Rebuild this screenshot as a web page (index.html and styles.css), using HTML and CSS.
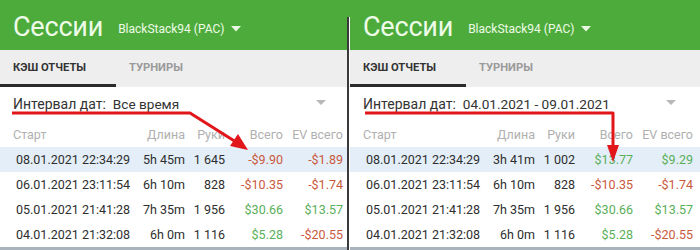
FILE: index.html
```html
<!DOCTYPE html>
<html lang="ru">
<head>
<meta charset="utf-8">
<link rel="stylesheet" href="styles.css">
</head>
<body>
<div class="screen">
  <section class="panel panel-left">
    <header class="appbar">
      <h1 class="title">Сессии</h1>
      <div class="account">BlackStack94 (РАС)<svg class="caret" width="10" height="6" viewBox="0 0 10 6"><path d="M0 0h10L5 5.5z" fill="#e8f6e2"/></svg></div>
    </header>
    <nav class="tabs">
      <div class="tab active">КЭШ ОТЧЕТЫ</div>
      <div class="tab">ТУРНИРЫ</div>
    </nav>
    <div class="filter">
      <span class="filter-label">Интервал дат:</span>
      <span class="filter-value">Все время</span>
      <svg class="filter-caret" width="10" height="6" viewBox="0 0 10 6"><path d="M0 0h10L5 5z" fill="#b8b8b8"/></svg>
    </div>
    <div class="table">
      <div class="row head"><span>Старт</span><span class="r">Длина</span><span class="r">Руки</span><span class="r">Всего</span><span class="r">EV всего</span></div>
      <div class="row sel"><span>08.01.2021 22:34:29</span><span class="r">5h 45m</span><span class="r">1 645</span><span class="r neg">-$9.90</span><span class="r neg">-$1.89</span></div>
      <div class="row"><span>06.01.2021 23:11:54</span><span class="r">6h 10m</span><span class="r">828</span><span class="r neg">-$10.35</span><span class="r neg">-$1.74</span></div>
      <div class="row"><span>05.01.2021 21:41:28</span><span class="r">7h 35m</span><span class="r">1 956</span><span class="r pos">$30.66</span><span class="r pos">$13.57</span></div>
      <div class="row"><span>04.01.2021 21:32:08</span><span class="r">6h 0m</span><span class="r">1 116</span><span class="r pos">$5.28</span><span class="r neg">-$20.55</span></div>
    </div>
    <div class="scrollbar"></div>
    <svg class="annot" width="347" height="250" viewBox="0 0 347 250">
      <polyline points="12,113 190,113 236,142" fill="none" stroke="#e0161a" stroke-width="3" stroke-linejoin="round"/>
      <polygon points="248,150 230,146 238,134" fill="#e0161a"/>
    </svg>
  </section>
  <div class="divider"></div>
  <section class="panel panel-right">
    <header class="appbar">
      <h1 class="title">Сессии</h1>
      <div class="account">BlackStack94 (РАС)<svg class="caret" width="10" height="6" viewBox="0 0 10 6"><path d="M0 0h10L5 5.5z" fill="#e8f6e2"/></svg></div>
    </header>
    <nav class="tabs">
      <div class="tab active">КЭШ ОТЧЕТЫ</div>
      <div class="tab">ТУРНИРЫ</div>
    </nav>
    <div class="filter">
      <span class="filter-label">Интервал дат:</span>
      <span class="filter-value">04.01.2021 - 09.01.2021</span>
      <svg class="filter-caret" width="10" height="6" viewBox="0 0 10 6"><path d="M0 0h10L5 5z" fill="#b8b8b8"/></svg>
    </div>
    <div class="table">
      <div class="row head"><span>Старт</span><span class="r">Длина</span><span class="r">Руки</span><span class="r">Всего</span><span class="r">EV всего</span></div>
      <div class="row sel"><span>08.01.2021 22:34:29</span><span class="r">3h 41m</span><span class="r">1 002</span><span class="r pos">$13.77</span><span class="r pos">$9.29</span></div>
      <div class="row"><span>06.01.2021 23:11:54</span><span class="r">6h 10m</span><span class="r">828</span><span class="r neg">-$10.35</span><span class="r neg">-$1.74</span></div>
      <div class="row"><span>05.01.2021 21:41:28</span><span class="r">7h 35m</span><span class="r">1 956</span><span class="r pos">$30.66</span><span class="r pos">$13.57</span></div>
      <div class="row"><span>04.01.2021 21:32:08</span><span class="r">6h 0m</span><span class="r">1 116</span><span class="r pos">$5.28</span><span class="r neg">-$20.55</span></div>
    </div>
    <div class="scrollbar"></div>
    <svg class="annot" width="350" height="250" viewBox="0 0 350 250">
      <polyline points="15,113 263,113 263,146" fill="none" stroke="#e0161a" stroke-width="3" stroke-linejoin="round"/>
      <polygon points="257,145 269,145 263,162" fill="#e0161a"/>
    </svg>
  </section>
</div>
</body>
</html>
```

FILE: styles.css
```css
* { box-sizing: border-box; }
html, body { margin: 0; padding: 0; }
body {
  width: 700px;
  height: 250px;
  overflow: hidden;
  background: #fff;
  font-family: Roboto, "Noto Sans", Arial, sans-serif;
  color: #333;
}
.screen {
  display: flex;
  width: 700px;
  height: 250px;
  background: #4dab3b;
}
.panel {
  position: relative;
  display: flex;
  flex-direction: column;
  background: #fff;
  overflow: hidden;
}
.panel-left { width: 347px; }
.panel-right { flex: 1; }
.divider {
  width: 3px;
  margin-top: 17px;
  background: #3a3a3a;
  border-right: 1px solid #fff;
}
.appbar {
  height: 50px;
  flex: none;
  background: #4dab3b;
  display: flex;
  align-items: center;
  padding: 4px 0 0 13px;
}
.title {
  margin: 0;
  font-size: 27px;
  font-weight: 400;
  color: #eefbe8;
  letter-spacing: -0.2px;
}
.account {
  margin-left: 15px;
  margin-top: 4px;
  font-size: 12px;
  color: #eefbe8;
  display: flex;
  align-items: center;
}
.caret { margin-left: 7px; }
.tabs {
  height: 37px;
  flex: none;
  background: #eeeeee;
  display: flex;
}
.tab {
  width: 116px;
  padding: 0 0 0 13px;
  display: flex;
  align-items: center;
  font-size: 11.2px;
  font-weight: 700;
  color: #9a9a9a;
  border-bottom: 3px solid transparent;
}
.tab.active {
  color: #333;
  border-bottom-color: #2b2b2b;
}
.filter {
  height: 33px;
  flex: none;
  display: flex;
  align-items: center;
  padding: 0 0 0 13px;
  font-size: 14px;
  color: #333;
}
.filter-value { margin-left: 7px; font-size: 13.6px; }
.filter-caret { position: absolute; left: 316px; top: 100px; }
.table { flex: none; }
.row {
  display: grid;
  grid-template-columns: 119px 50px 40px 58px 60px;
  align-items: center;
  height: 25px;
  padding-left: 16px;
  font-size: 12.5px;
  color: #2e2e2e;
}
.row.head {
  height: 27px;
  padding-left: 13px;
  grid-template-columns: 122px 50px 40px 58px 60px;
  color: #b0b0b0;
  padding-top: 1px;
}
.row.sel { background: #e4eef8; }
.r { text-align: right; }
.neg { color: #c9593d; }
.pos { color: #5aaf5a; }
.scrollbar {
  margin-top: auto;
  height: 3px;
  background: #a9b3be;
}
.annot {
  position: absolute;
  left: 0;
  top: 0;
  pointer-events: none;
}
```
